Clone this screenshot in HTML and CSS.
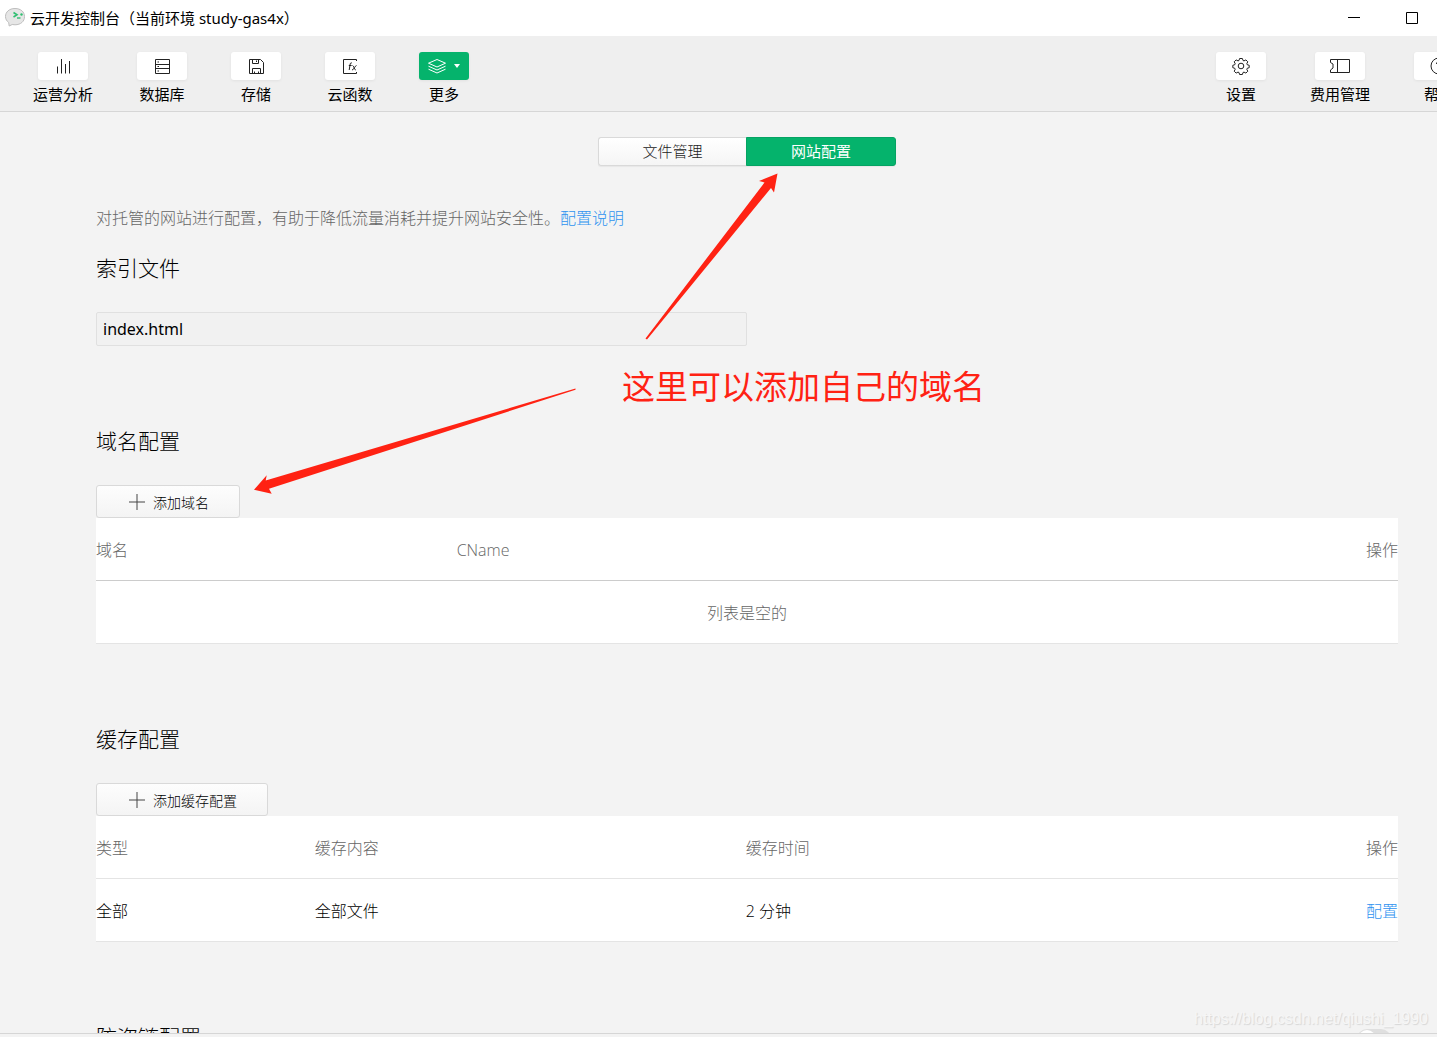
FILE: index.html
```html
<!DOCTYPE html>
<html lang="zh-CN">
<head>
<meta charset="utf-8">
<title>云开发控制台</title>
<link rel="stylesheet" href="styles.css">
</head>
<body>
<div class="app">
  <header class="titlebar">
    <svg class="app-icon" width="22" height="20" viewBox="0 0 22 20" aria-hidden="true">
      <path d="M11 .5C5.200.5 1.500 4 1.500 8.500c0 2.500 1.200 4.500 3.200 6l.5 3.500 3-1.500c1 .2 1.800.3 2.800.3 5.800 0 9.500-3.500 9.500-8.200S16.800.5 11 .5z" fill="#e6e6e6" stroke="#bdbdbd"/>
      <path d="M9.500 4.500l3.500 2.300L9.500 9" fill="none" stroke="#2fbf71" stroke-width="1.600"/>
      <circle cx="17.500" cy="6.500" r="1.200" fill="#2fbf71" stroke="none"/>
      <path d="M13 10h3.500" stroke="#2fbf71" stroke-width="1.400"/>
    </svg>
    <h1 class="title">云开发控制台（当前环境 study-gas4x）</h1>
    <div class="window-controls">
      <button class="window-button" type="button" aria-label="最小化"><svg width="12" height="12" viewBox="0 0 12 12"><path d="M0 5.500h12"/></svg></button>
      <button class="window-button" type="button" aria-label="最大化"><svg width="12" height="12" viewBox="0 0 12 12"><path d="M.5.5h11v11H.5z"/></svg></button>
      <button class="window-button" type="button" aria-label="关闭"><svg width="12" height="12" viewBox="0 0 12 12"><path d="M.5.5l11 11M11.500.5l-11 11"/></svg></button>
    </div>
  </header>

  <nav class="toolbar">
    <button class="tool" type="button">
      <span class="tool-face"><svg width="16" height="16" viewBox="0 0 16 16"><path d="M2.500 8.500v7M6.500 1v14.500M10.500 6v9.500M14.500 3v12.500"/></svg></span>
      <span class="tool-label">运营分析</span>
    </button>
    <button class="tool" type="button">
      <span class="tool-face"><svg width="16" height="16" viewBox="0 0 16 16"><path d="M1.500 1.500h14v14h-14zM1.500 6.500h14M1.500 10.500h14M3.500 4H5M3.500 8.500H5M3.500 13H5"/></svg></span>
      <span class="tool-label">数据库</span>
    </button>
    <button class="tool" type="button">
      <span class="tool-face"><svg width="16" height="16" viewBox="0 0 16 16"><path d="M1.500 1.500h11l3 3v11h-14zM4.500 1.500v4h6v-4M8.500 2.500v1.500M4.500 15.500v-5h8v5M6.500 13.500v2M10.500 13.500v2"/></svg></span>
      <span class="tool-label">存储</span>
    </button>
    <button class="tool" type="button">
      <span class="tool-face"><svg width="16" height="16" viewBox="0 0 16 16"><path d="M14.500 3V1.500H1.500v14h13V14M9.900 5C8.500 4.400 8.200 5.500 8 7l-.8 5M6.800 7.500h2.800M10.500 7.500c1.500 0 1.500 4.500 3.300 4.500M14.500 7.500c-1.500 0-2.500 4.500-4.500 4.500"/></svg></span>
      <span class="tool-label">云函数</span>
    </button>
    <button class="tool tool-active" type="button">
      <span class="tool-face"><svg width="34" height="16" viewBox="0 0 34 16"><path d="M10 1.500L18.500 5.200 10 9 1.500 5.200zM1.500 8.200L10 12l8.500-3.800M1.500 11.200L10 15l8.500-3.800"/><path class="solid" d="M27 6h6l-3 4z"/></svg></span>
      <span class="tool-label">更多</span>
    </button>
    <button class="tool tool-end" type="button">
      <span class="tool-face"><svg width="18" height="18" viewBox="0 0 18 18"><circle cx="9" cy="9" r="2.800"/><path d="M7.600 1.500h2.800l.6 2 1 .4 1.900-1 1.900 1.900-1 1.900.4 1 2 .6v2.400l-2 .6-.4 1 1 1.900-1.900 1.900-1.900-1-1 .4-.6 2H7.600l-.6-2-1-.4-1.900 1-1.900-1.900 1-1.900-.4-1-2-.6V8.300l2-.6.4-1-1-1.900 1.900-1.900 1.900 1 1-.4z"/></svg></span>
      <span class="tool-label">设置</span>
    </button>
    <button class="tool" type="button">
      <span class="tool-face"><svg width="20" height="16" viewBox="0 0 20 16"><path d="M.5 1.500h19v13H.5v-2.500l2.500-2V6L.5 4.500zM7.500 1.500v13"/></svg></span>
      <span class="tool-label">费用管理</span>
    </button>
    <button class="tool" type="button">
      <span class="tool-face"><svg width="18" height="18" viewBox="0 0 18 18"><circle cx="9" cy="9" r="8"/><path d="M6.500 7c0-3.300 5-3.300 5 0 0 1.500-2.500 2-2.500 3.500v.5M9 12.500V14"/></svg></span>
      <span class="tool-label">帮助</span>
    </button>
  </nav>

  <main class="content">
    <div class="tabs">
      <button class="tab" type="button">文件管理</button>
      <button class="tab tab-active" type="button">网站配置</button>
    </div>
    <p class="intro">对托管的网站进行配置，有助于降低流量消耗并提升网站安全性。<a class="link" href="#">配置说明</a></p>

    <section class="section">
      <h2 class="heading"><label for="index-file">索引文件</label></h2>
      <input class="field" id="index-file" type="text" value="index.html">
    </section>

    <section class="section">
      <h2 class="heading">域名配置</h2>
      <button class="add" type="button"><svg width="16" height="16" viewBox="0 0 16 16"><path d="M8 0v16M0 8h16"/></svg>添加域名</button>
      <table class="list list-domain">
        <thead><tr><th class="col-domain">域名</th><th>CName</th><th class="col-action">操作</th></tr></thead>
        <tbody><tr><td class="empty" colspan="3">列表是空的</td></tr></tbody>
      </table>
    </section>

    <section class="section">
      <h2 class="heading">缓存配置</h2>
      <button class="add" type="button"><svg width="16" height="16" viewBox="0 0 16 16"><path d="M8 0v16M0 8h16"/></svg>添加缓存配置</button>
      <table class="list">
        <thead><tr><th class="col-type">类型</th><th class="col-cache">缓存内容</th><th>缓存时间</th><th class="col-action">操作</th></tr></thead>
        <tbody><tr><td>全部</td><td>全部文件</td><td>2 分钟</td><td class="col-action"><a class="link" href="#">配置</a></td></tr></tbody>
      </table>
    </section>

    <section class="section section-switch">
      <h2 class="heading"><label for="hotlink">防盗链配置</label></h2>
      <input class="switch" id="hotlink" type="checkbox">
    </section>
  </main>
  <footer class="statusbar"></footer>
</div>

<svg class="arrows" width="800" height="520" viewBox="0 0 800 520" aria-hidden="true">
  <path d="M777.500 173.500L759 181l5.500 1.500L645.500 338.500l1.500 1L771 188l3 4.500z"/>
  <path d="M254 489.700L266.700 475.300l-1 5.200L575.500 388.500v1.300L269 488.700l2.700 5z"/>
</svg>
<p class="note">这里可以添加自己的域名</p>
<p class="watermark">https://blog.csdn.net/qiushi_1990</p>
</body>
</html>
```
FILE: styles.css
```css
* {
  box-sizing: border-box;
}

body {
  position: relative;
  height: 100vh;
  margin: 0;
  overflow: hidden;
  background: #f3f3f3;
  color: #000;
  font-family: "Open Sans", "Noto Sans CJK SC", sans-serif;
  font-size: 16px;
  font-weight: 300;
}

button,
input {
  margin: 0;
  padding: 0;
  border: 0;
  background: none;
  color: inherit;
  font: inherit;
}

svg {
  display: block;
  flex: none;
  fill: none;
  stroke: #222;
}

h1,
h2,
p {
  margin: 0;
  font-weight: inherit;
}

/* The app window runs a little past the right edge of the screen. */
.app {
  display: flex;
  flex-direction: column;
  width: calc(100% + 57px);
  height: 100%;
}

.titlebar {
  display: flex;
  flex: none;
  align-items: center;
  height: 36px;
  padding-left: 4px;
  background: #fff;
}

.title {
  margin-left: 4px;
  font-family: "Noto Sans", "Noto Sans CJK SC", sans-serif;
  font-size: 15px;
  font-weight: 400;
  line-height: 22px;
}

.window-controls {
  display: flex;
  margin-left: auto;
  margin-right: -5px;
}

.window-button {
  display: flex;
  align-items: center;
  justify-content: center;
  width: 58px;
  height: 34px;
}

.window-button svg {
  stroke: #000;
}

.toolbar {
  display: flex;
  flex: none;
  gap: 44px;
  height: 76px;
  padding: 16px 30px 0 33px;
  border-bottom: 1px solid #d6d6d6;
  background: #efefef;
}

.tool {
  display: flex;
  flex: none;
  flex-direction: column;
  align-items: center;
  gap: 2px;
  min-width: 50px;
  font-size: 15px;
  font-weight: 400;
  line-height: 24px;
}

.tool-end {
  margin-left: auto;
}

.tool-face {
  display: flex;
  align-items: center;
  justify-content: center;
  width: 50px;
  height: 28px;
  border-radius: 3px;
  background: #fff;
  box-shadow: 0 1px 3px rgba(0, 0, 0, 0.06);
}

.tool-active .tool-face {
  background: #05b36c;
}

.tool-active svg {
  stroke: #fff;
}

.solid {
  fill: #fff;
  stroke: none;
}

.content {
  flex: 1;
  min-height: 0;
  padding: 25px 96px 0;
  overflow: hidden;
}

.tabs {
  display: flex;
  justify-content: center;
}

.tab {
  width: 148px;
  height: 29px;
  border: 1px solid #d9d9d9;
  border-right: 0;
  border-radius: 3px 0 0 3px;
  background: linear-gradient(#fff, #f5f5f5);
  box-shadow: 0 1px 1px rgba(0, 0, 0, 0.05);
  color: #222;
  font-size: 15px;
  line-height: 27px;
}

.tab-active {
  width: 150px;
  border: 1px solid #05a363;
  border-radius: 0 3px 3px 0;
  background: #05b36c;
  color: #fff;
  font-weight: 400;
}

.intro {
  margin: 40px 0 23px;
  color: #666;
  line-height: 24px;
}

.link {
  color: #2f93f0;
  text-decoration: none;
}

.section {
  margin-bottom: 80px;
}

.heading {
  margin-bottom: 29px;
  font-size: 21px;
  line-height: 30px;
}

.field {
  display: block;
  width: 50%;
  height: 34px;
  padding: 0 6px;
  border: 1px solid #e0e0e0;
  border-radius: 2px;
  background: #f1f1f1;
  font-family: "Noto Sans", sans-serif;
  font-weight: 400;
}

.add {
  display: flex;
  align-items: center;
  gap: 8px;
  height: 33px;
  padding: 0 30px 0 32px;
  border: 1px solid #d9d9d9;
  border-radius: 3px;
  background: linear-gradient(#fdfdfd, #f4f4f4);
  font-size: 14px;
}

.add svg {
  stroke: #444;
}

.list {
  width: 100%;
  border-spacing: 0;
  table-layout: fixed;
  background: #fff;
}

.list th,
.list td {
  height: 63px;
  padding: 2px 0 0;
  border-bottom: 1px solid #e4e4e4;
  font-weight: inherit;
  line-height: 24px;
  text-align: left;
}

.list-domain th {
  border-bottom-color: #ccc;
}

.list th,
.list .empty {
  color: #666;
}

.list .empty {
  text-align: center;
}

.list .col-action {
  text-align: right;
}

.col-domain {
  width: 27.7%;
}

.col-type {
  width: 16.8%;
}

.col-cache {
  width: 33.1%;
}

.section-switch {
  display: flex;
  justify-content: space-between;
}

.switch {
  position: relative;
  width: 34px;
  height: 20px;
  margin: 7px 7px 0 0;
  border-radius: 10px;
  background: #dfdfdf;
  appearance: none;
}

.switch::before {
  position: absolute;
  top: 1px;
  left: 1px;
  width: 18px;
  height: 18px;
  border-radius: 9px;
  background: #fff;
  content: "";
}

.statusbar {
  flex: none;
  height: 4px;
  border-top: 1px solid #d6d6d6;
}

/* Hand-drawn notes lying over the window */
.arrows {
  position: absolute;
  top: 0;
  left: 0;
  fill: #ff2213;
  stroke: none;
  pointer-events: none;
}

.note {
  position: absolute;
  top: 363px;
  left: 622px;
  color: #ff2213;
  font-size: 33px;
  font-weight: 400;
  line-height: 48px;
}

.watermark {
  position: absolute;
  right: 9px;
  bottom: 8px;
  color: #f6f6f6;
  font-family: "Liberation Sans", sans-serif;
  font-size: 16px;
  font-weight: 400;
  line-height: 20px;
  text-shadow: 1px 1px 1px #d6d6d6;
}
```
